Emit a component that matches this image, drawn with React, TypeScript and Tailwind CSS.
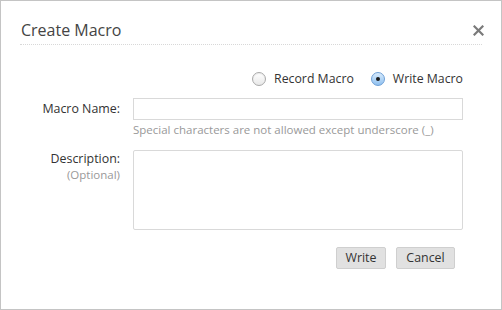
import React from "react";

export default function App() {
  const font = { fontFamily: '"Open Sans", "DejaVu Sans", sans-serif' };
  return (
    <div className="w-[502px] h-[310px] bg-white border border-[#c4c4c4] box-border flex flex-col text-[#333]" style={font}>
      <div className="mx-[19px] mt-[16px] h-[28px] flex items-start justify-between border-b border-dotted border-[#d8d8d8]">
        <div className="text-[16px] leading-[28px] text-[#444] -mt-[1px] ml-[1px]">Create Macro</div>
        <div className="mt-[8px] mr-[-2px]">
          <svg width="11" height="11" viewBox="0 0 11 11">
            <path d="M1.5 1.5 L9.5 9.5 M9.5 1.5 L1.5 9.5" stroke="#7a7a7a" strokeWidth="2.2" strokeLinecap="square" />
          </svg>
        </div>
      </div>
      <div className="flex justify-end items-center mt-[24px] mr-[38px] h-[20px] text-[12.3px] gap-[17px]">
        <label className="flex items-center gap-[8px]">
          <span className="w-[14px] h-[14px] rounded-full border border-[#a9a9a9] bg-gradient-to-b from-white to-[#e8e8e8] shadow-[inset_0_1px_1px_rgba(0,0,0,0.08)]" />
          <span>Record Macro</span>
        </label>
        <label className="flex items-center gap-[8px]">
          <span className="w-[14px] h-[14px] rounded-full border border-[#6d9fd6] bg-gradient-to-b from-[#d8ebfc] to-[#8fc0ef] flex items-center justify-center">
            <span className="w-[4px] h-[4px] rounded-full bg-[#1a1a1a]" />
          </span>
          <span>Write Macro</span>
        </label>
      </div>
      <div className="flex mt-[9px]">
        <div className="w-[119px] text-right text-[12.4px] leading-[22px]">Macro Name:</div>
        <div className="ml-[13px] flex flex-col">
          <div className="w-[330px] h-[22px] border border-[#d9d9d9] bg-white" />
          <div className="text-[11.5px] text-[#999] leading-[20px]">Special characters are not allowed except underscore (_)</div>
        </div>
      </div>
      <div className="flex mt-[10px]">
        <div className="w-[119px] text-right flex flex-col pt-[1px]">
          <span className="block text-[12.4px] leading-[16px] h-[16px]">Description:</span>
          <span className="block text-[11.5px] leading-[16px] h-[16px] text-[#999]">(Optional)</span>
        </div>
        <div className="ml-[13px] w-[330px] h-[80px] border border-[#d9d9d9] rounded-[2px] bg-white" />
      </div>
      <div className="flex justify-end mt-[17px] mr-[46px] gap-[10px]">
        <button className="w-[50px] h-[22px] bg-[#e1e1e1] border border-[#cfcfcf] rounded-[2px] text-[12.4px] text-[#333] leading-[20px]" style={font}>Write</button>
        <button className="w-[59px] h-[22px] bg-[#e1e1e1] border border-[#cfcfcf] rounded-[2px] text-[12.4px] text-[#333] leading-[20px]" style={font}>Cancel</button>
      </div>
    </div>
  );
}
